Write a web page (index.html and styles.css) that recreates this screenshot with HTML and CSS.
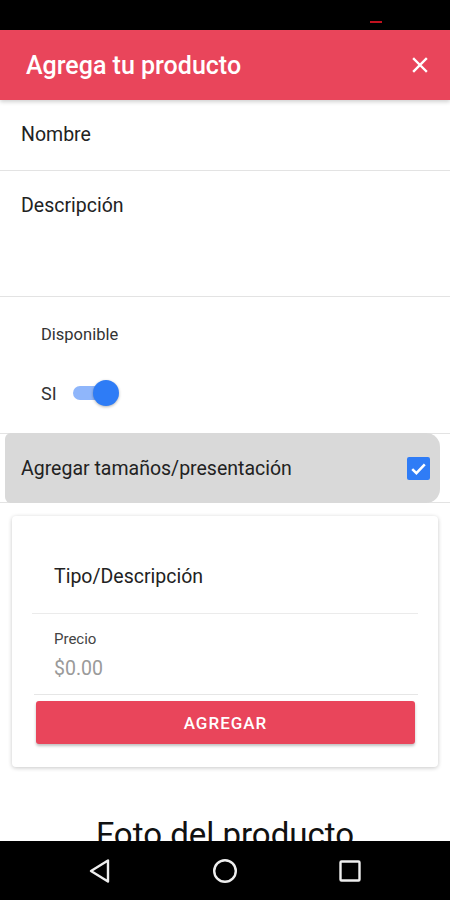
FILE: index.html
```html
<!DOCTYPE html>
<html lang="es">
<head>
<meta charset="utf-8">
<link rel="stylesheet" href="styles.css">
</head>
<body>
<div class="screen">
  <div class="statusbar"><span class="dash"></span></div>
  <header class="appbar">
    <h1 class="title">Agrega tu producto</h1>
    <svg class="close" width="16" height="16" viewBox="0 0 16 16"><path d="M2 2L14 14M14 2L2 14" stroke="#fff" stroke-width="2.4" stroke-linecap="square"/></svg>
  </header>
  <main class="content">
    <div class="field field-name">Nombre</div>
    <div class="field field-desc">Descripción</div>
    <section class="avail">
      <div class="avail-label">Disponible</div>
      <div class="avail-row">
        <span class="si">SI</span>
        <span class="switch"><span class="track"></span><span class="thumb"></span></span>
      </div>
    </section>
    <div class="sizes-wrap">
      <div class="sizes">
        <span class="sizes-text">Agregar tamaños/presentación</span>
        <span class="check"><svg width="23" height="23" viewBox="0 0 22 22"><rect width="22" height="22" rx="2" fill="#2f7cf6"/><path d="M5 11.5L9 15.5L17 7" fill="none" stroke="#fff" stroke-width="2.4"/></svg></span>
      </div>
    </div>
    <div class="card">
      <div class="card-type">Tipo/Descripción</div>
      <div class="card-price">
        <div class="price-label">Precio</div>
        <div class="price-value">$0.00</div>
      </div>
      <button class="btn">AGREGAR</button>
    </div>
    <h2 class="photo">Foto del producto</h2>
  </main>
  <nav class="navbar">
    <svg width="24" height="26" viewBox="0 0 24 26"><path d="M20 2.5L20 23.5L3 13Z" fill="none" stroke="#eee" stroke-width="2.4" stroke-linejoin="round"/></svg>
    <svg width="26" height="26" viewBox="0 0 26 26"><circle cx="13" cy="13" r="10.8" fill="none" stroke="#eee" stroke-width="2.4"/></svg>
    <svg width="24" height="24" viewBox="0 0 24 24"><rect x="2.5" y="2.5" width="19" height="19" rx="1" fill="none" stroke="#eee" stroke-width="2.4"/></svg>
  </nav>
</div>
</body>
</html>
```
FILE: styles.css
```css
* { box-sizing: border-box; }
html, body { margin: 0; padding: 0; }
body { font-family: Roboto, "Noto Sans", Arial, sans-serif; background: #fff; color: #222; }
.screen { width: 450px; height: 900px; position: relative; overflow: hidden; display: flex; flex-direction: column; }
.statusbar { height: 30px; background: #000; display: flex; justify-content: flex-end; align-items: flex-end; padding: 0 68px 7px 0; flex-shrink: 0; }
.dash { width: 12px; height: 2px; background: #c1121f; display: block; }
.appbar { height: 70px; background: #e9455b; display: flex; align-items: center; justify-content: space-between; padding: 0 22px 0 26px; box-shadow: 0 2px 4px rgba(0,0,0,0.18); position: relative; z-index: 2; flex-shrink: 0; }
.title { margin: 0; color: #fff; font-size: 25px; font-weight: 500; line-height: 30px; padding-top: 2px; }
.close { display: block; }
.content { flex: 1; overflow: hidden; display: flex; flex-direction: column; }
.content > * { flex-shrink: 0; }
.field { font-size: 19.5px; line-height: 24px; color: #222; padding-left: 21px; border-bottom: 1.5px solid #e3e3e3; }
.field-name { height: 71px; padding-top: 23px; }
.field-desc { height: 126px; padding-top: 23px; }
.avail { padding: 28px 0 0 41px; height: 136px; }
.avail-label { font-size: 16.5px; line-height: 20px; color: #333; }
.avail-row { display: flex; align-items: center; margin-top: 35px; height: 26px; }
.si { font-size: 18px; color: #333; width: 32px; }
.switch { position: relative; width: 46px; height: 26px; display: inline-block; }
.track { position: absolute; left: 0; top: 6px; width: 34px; height: 14px; border-radius: 7px; background: #8fb6fb; }
.thumb { position: absolute; left: 20px; top: 0; width: 26px; height: 26px; border-radius: 50%; background: #2e7cf6; box-shadow: 0 1px 3px rgba(0,0,0,0.3); }
.sizes-wrap { height: 70px; border-top: 1.5px solid #e3e3e3; border-bottom: 1.5px solid #e3e3e3; position: relative; }
.sizes { position: absolute; left: 5px; right: 10px; top: -1px; bottom: -1px; background: #d9d9d9; border-radius: 6px 14px 14px 6px; display: flex; align-items: center; justify-content: space-between; padding: 0 10px 0 16px; }
.sizes-text { font-size: 19.5px; color: #222; }
.check { display: flex; }
.card { margin: 13px 12px 0; background: #fff; border-radius: 4px; box-shadow: 0 1px 4px rgba(0,0,0,0.22); padding: 0 23px 23px 24px; height: 251px; }
.card-type { height: 98px; padding: 49px 0 0 22px; font-size: 19.5px; line-height: 24px; color: #222; border-bottom: 1.5px solid #ebebeb; margin: 0 -3px 0 -4px; }
.card-price { height: 81px; padding: 16px 0 0 20px; border-bottom: 1.5px solid #e6e6e6; margin: 0 -3px 0 -2px; }
.price-label { font-size: 15px; line-height: 18px; color: #444; }
.price-value { font-size: 19.5px; line-height: 24px; color: #9a9a9a; margin-top: 9px; }
.btn { display: block; width: 100%; height: 43px; margin-top: 6px; border: 0; border-radius: 3px; background: #e9455b; color: #fff; font-family: Roboto, Arial, sans-serif; font-size: 17px; font-weight: 500; letter-spacing: 1px; box-shadow: 0 2px 3px rgba(0,0,0,0.25); }
.photo { margin: 48px 0 0; text-align: center; font-size: 33px; line-height: 39px; font-weight: 400; color: #111; }
.navbar { height: 59px; background: #000; display: flex; align-items: center; padding: 0 88px; justify-content: space-between; flex-shrink: 0; }
```
